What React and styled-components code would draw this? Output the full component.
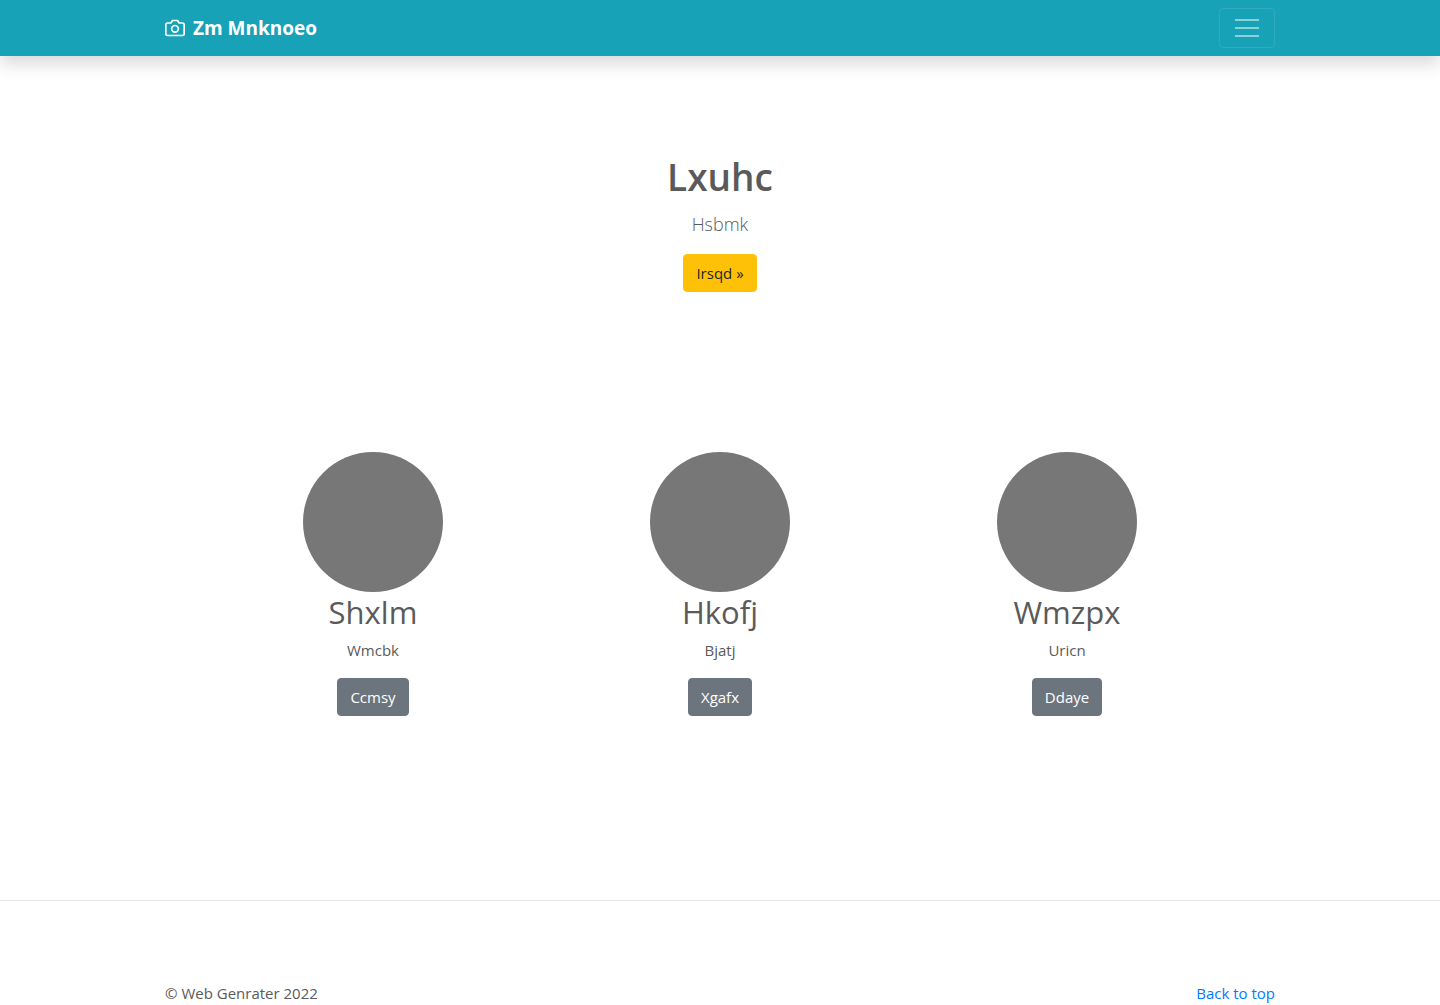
import React, { useState } from "react";
import styled, { createGlobalStyle } from "styled-components";

const Global = createGlobalStyle`
  *, *::before, *::after { box-sizing: border-box; }
  body {
    margin: 0;
    background: #fff;
    color: #5a5a5a;
    font: 400 15px/24px "Open Sans", "Noto Sans", sans-serif;
  }
`;

const Container = styled.div`
  width: 100%;
  max-width: 1140px;
  margin: 0 auto;
  padding: 0 15px;
`;

const Header = styled.header`
  background: #17a2b8;
  box-shadow: 0 8px 16px rgba(0, 0, 0, 0.15);
`;

const Bar = styled(Container)`
  display: flex;
  align-items: center;
  justify-content: space-between;
  padding-top: 8px;
  padding-bottom: 8px;
`;

const Brand = styled.a`
  display: flex;
  align-items: center;
  gap: 8px;
  color: #fff;
  font-size: 19px;
  font-weight: 700;
  line-height: 30px;
  text-decoration: none;
`;

const Toggler = styled.button`
  display: flex;
  padding: 4px 12px;
  border: 1px solid rgba(255, 255, 255, 0.1);
  border-radius: 4px;
  background: transparent;
  cursor: pointer;
`;

const Hero = styled.section`
  display: flex;
  flex-direction: column;
  align-items: center;
  padding: 96px 15px 160px;
`;

const Title = styled.h1`
  margin: 0 0 8px;
  font-size: 37px;
  font-weight: 600;
  line-height: 50px;
`;

const Lead = styled.p`
  margin: 0 0 16px;
  font-size: 18px;
  font-weight: 300;
  line-height: 28px;
`;

const Button = styled.button`
  padding: 6px 12px;
  border: 1px solid ${(p) => (p.$primary ? "#ffc107" : "#6c757d")};
  border-radius: 4px;
  background: ${(p) => (p.$primary ? "#ffc107" : "#6c757d")};
  color: ${(p) => (p.$primary ? "#212529" : "#fff")};
  font: inherit;
  cursor: pointer;
`;

const Features = styled.section`
  display: grid;
  grid-template-columns: repeat(3, 1fr);
  width: 100%;
  max-width: 1041px;
  margin: 0 auto;
  padding-bottom: 184px;
`;

const Feature = styled.article`
  display: flex;
  flex-direction: column;
  align-items: center;
`;

const Avatar = styled.div`
  width: 140px;
  height: 140px;
  border-radius: 50%;
  background: #777;
`;

const Heading = styled.h2`
  margin: 0 0 6px;
  font-size: 31px;
  font-weight: 400;
  line-height: 40px;
`;

const Text = styled.p`
  margin: 0 0 16px;
`;

const Divider = styled.hr`
  margin: 0;
  border: 0;
  border-top: 1px solid rgba(0, 0, 0, 0.1);
`;

const Footer = styled(Container)`
  display: flex;
  justify-content: space-between;
  padding-top: 80px;
`;

const TopLink = styled.a`
  color: #007bff;
  text-decoration: none;
`;

const features = [
  { name: "Shxlm", text: "Wmcbk", action: "Ccmsy" },
  { name: "Hkofj", text: "Bjatj", action: "Xgafx" },
  { name: "Wmzpx", text: "Uricn", action: "Ddaye" },
];

export default function App() {
  const [open, setOpen] = useState(false);
  return (
    <>
      <Global />
      <Header id="top">
        <Bar>
          <Brand href="#top">
            <svg width="20" height="20" viewBox="0 0 24 24" fill="none" stroke="currentColor" strokeWidth="2" strokeLinecap="round" strokeLinejoin="round" aria-hidden="true">
              <path d="M23 19a2 2 0 0 1-2 2H3a2 2 0 0 1-2-2V8a2 2 0 0 1 2-2h4l2-3h6l2 3h4a2 2 0 0 1 2 2z" />
              <circle cx="12" cy="13" r="4" />
            </svg>
            Zm Mnknoeo
          </Brand>
          <Toggler type="button" aria-label="Toggle navigation" aria-expanded={open} onClick={() => setOpen(!open)}>
            <svg width="30" height="30" viewBox="0 0 30 30" stroke="rgba(255,255,255,0.5)" strokeWidth="2" aria-hidden="true">
              <path d="M3 7h24M3 15h24M3 23h24" />
            </svg>
          </Toggler>
        </Bar>
      </Header>
      <main>
        <Hero>
          <Title>Lxuhc</Title>
          <Lead>Hsbmk</Lead>
          <Button type="button" $primary>Irsqd »</Button>
        </Hero>
        <Features>
          {features.map((f) => (
            <Feature key={f.name}>
              <Avatar />
              <Heading>{f.name}</Heading>
              <Text>{f.text}</Text>
              <Button type="button">{f.action}</Button>
            </Feature>
          ))}
        </Features>
      </main>
      <Divider />
      <Footer as="footer">
        <span>© Web Genrater 2022</span>
        <TopLink href="#top">Back to top</TopLink>
      </Footer>
    </>
  );
}
